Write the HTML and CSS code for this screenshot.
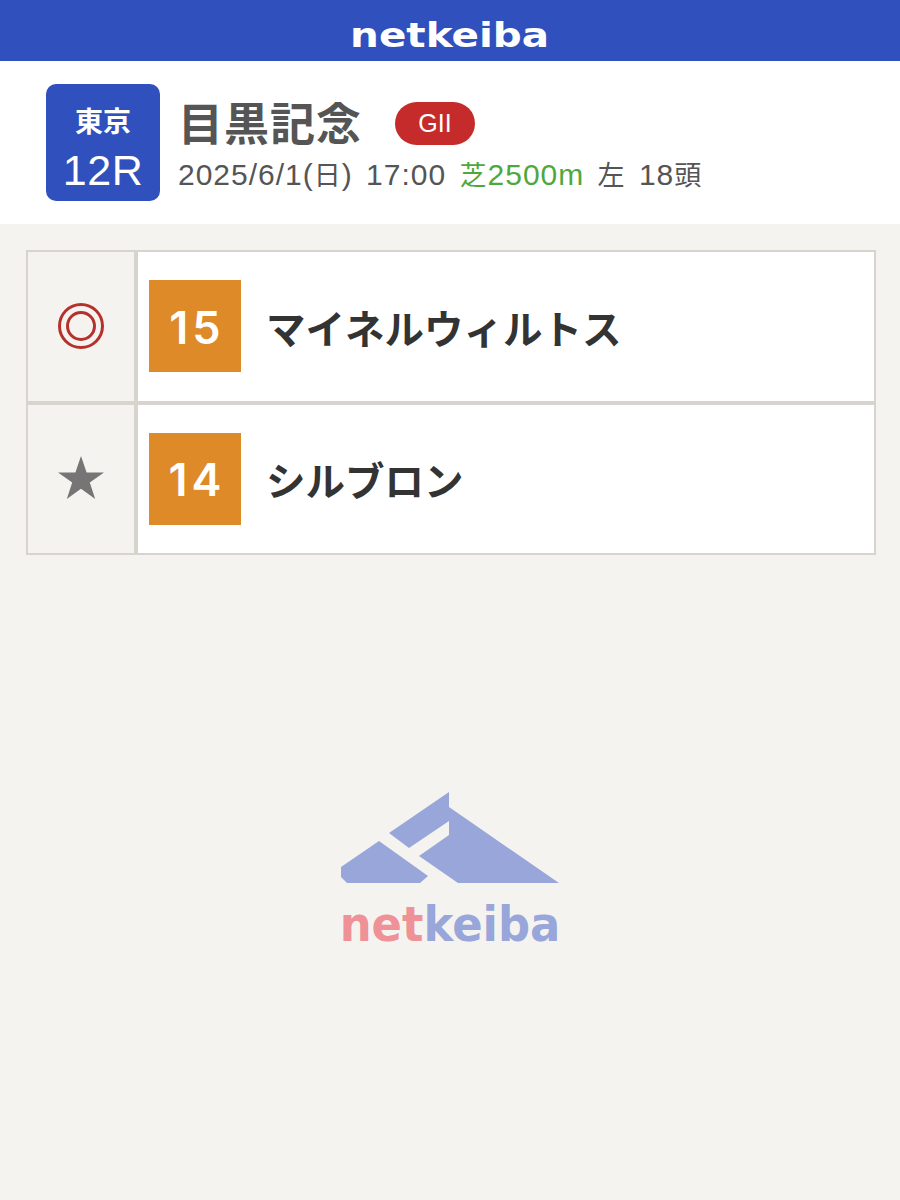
FILE: index.html
```html
<!DOCTYPE html>
<html lang="ja">
<head>
    <meta charset="UTF-8">
    <title>netkeiba 目黒記念</title>
    <link rel="stylesheet" href="styles.css">
</head>
<body>
    <header class="topbar"><span class="topbar-logo">netkeiba</span></header>

    <section class="race">
        <div class="race-box">
            <span class="race-place">東京</span>
            <span class="race-num">12R</span>
        </div>
        <div class="race-info">
            <div class="race-title">
                <h1>目黒記念</h1>
                <span class="grade">GII</span>
            </div>
            <p class="race-meta">2025/6/1(<span class="kanji">日</span>) 17:00 <span class="turf"><span class="kanji">芝</span>2500m</span> <span class="kanji">左</span> 18<span class="kanji">頭</span></p>
        </div>
    </section>

    <div class="picks">
        <div class="pick">
            <div class="mark">
                <svg width="48" height="48" viewBox="0 0 48 48">
                    <circle cx="24" cy="24" r="21.5" fill="none" stroke="#b5322c" stroke-width="3"/>
                    <circle cx="24" cy="24" r="13.5" fill="none" stroke="#b5322c" stroke-width="3"/>
                </svg>
            </div>
            <div class="horse">
                <span class="num">15</span>
                <span class="name">マイネルウィルトス</span>
            </div>
        </div>
        <div class="pick">
            <div class="mark">
                <svg class="star" width="46" height="43" viewBox="0 0 46 44" preserveAspectRatio="none">
                    <polygon points="23,0 28.6,16.8 46,16.8 31.8,27.2 37.2,44 23,33.6 8.8,44 14.2,27.2 0,16.8 17.4,16.8" fill="#757575"/>
                </svg>
            </div>
            <div class="horse">
                <span class="num">14</span>
                <span class="name">シルブロン</span>
            </div>
        </div>
    </div>

    <div class="foot-logo">
        <svg width="220" height="94" viewBox="11 11 220 94">
            <polygon points="119,12 119,27 229,103 128,103 89,76 119,55 119,41 79,68 59,53" fill="#98a6d9"/>
            <polygon points="49,61 98,96 90,103 17,103 11,97 11,87" fill="#98a6d9"/>
        </svg>
        <div class="foot-text"><span class="foot-net">net</span><span class="foot-keiba">keiba</span></div>
    </div>
</body>
</html>
```

FILE: styles.css
```css
body {
    margin: 0;
    padding: 0;
    background-color: #f5f3f0;
    font-family: "Liberation Sans", "Noto Sans CJK JP", sans-serif;
    color: #555;
}

/* Top bar */
.topbar {
    height: 61px;
    background-color: #3050bd;
    display: flex;
    align-items: center;
    justify-content: center;
    padding-top: 8px;
    box-sizing: border-box;
}

.topbar-logo {
    font-family: "DejaVu Sans", sans-serif;
    font-weight: bold;
    font-size: 34px;
    line-height: 1;
    color: white;
    transform: scaleX(1.19);
}

/* Race header */
.race {
    height: 163px;
    box-sizing: border-box;
    padding: 23px 0 0 46px;
    background-color: white;
    display: flex;
    gap: 18px;
}

.race-box {
    width: 114px;
    height: 117px;
    border-radius: 10px;
    background-color: #3050bd;
    color: white;
    display: flex;
    flex-direction: column;
    align-items: center;
    padding-top: 23px;
    box-sizing: border-box;
}

.race-place {
    font-size: 28px;
    font-weight: bold;
    line-height: 32px;
}

.race-num {
    font-size: 43px;
    letter-spacing: 0.5px;
    line-height: 50px;
    margin-top: 6px;
}

.race-info {
    padding-top: 14px;
}

.race-title {
    display: flex;
    align-items: center;
    gap: 33px;
    height: 52px;
}

h1 {
    margin: 4px 0 0;
    font-size: 45px;
    letter-spacing: 1px;
    line-height: 52px;
    font-weight: bold;
    color: #555;
}

.grade {
    width: 80px;
    height: 43px;
    margin-bottom: 2px;
    border-radius: 22px;
    background-color: #c62b2b;
    color: white;
    font-size: 25px;
    display: flex;
    align-items: center;
    justify-content: center;
}

.race-meta {
    margin: 3px 0 0;
    font-size: 30px;
    letter-spacing: 1px;
    word-spacing: 4px;
    line-height: 44px;
    color: #555;
}

.kanji {
    font-size: 27px;
}

.turf {
    color: #4fa83d;
}

/* Picks */
.picks {
    margin: 26px 24px 0 26px;
    display: flex;
    flex-direction: column;
}

.pick {
    display: flex;
    height: 152.5px;
    box-sizing: border-box;
    border: 2px solid #d6d4cd;
}

.mark {
    width: 106px;
    border-right: 4px solid #d6d4cd;
    display: flex;
    align-items: center;
    justify-content: center;
}

.star {
    margin-bottom: 3px;
}

.horse {
    flex: 1;
    background-color: white;
    display: flex;
    align-items: center;
    padding-left: 11px;
    gap: 25px;
}

.num {
    width: 92px;
    height: 92px;
    box-sizing: border-box;
    padding: 2px 0 0 4px;
    background-color: #de8a28;
    color: white;
    font-family: Inter, sans-serif;
    font-weight: 600;
    font-size: 45px;
    letter-spacing: 4px;
    display: flex;
    align-items: center;
    justify-content: center;
}

.name {
    font-family: "Noto Sans CJK JP", sans-serif;
    font-size: 39.5px;
    font-weight: bold;
    color: #333;
}

/* Bottom logo */
.foot-logo {
    margin-top: 236px;
    display: flex;
    flex-direction: column;
    align-items: center;
}

.foot-logo svg {
    display: block;
    margin-left: 2px;
}

.foot-text {
    margin-top: 14px;
    font-family: "DejaVu Sans", sans-serif;
    font-weight: bold;
    font-size: 48px;
    line-height: 50px;
    transform: scaleX(0.935);
}

.foot-net {
    color: #ee9297;
}

.foot-keiba {
    color: #98a6d9;
}
```
